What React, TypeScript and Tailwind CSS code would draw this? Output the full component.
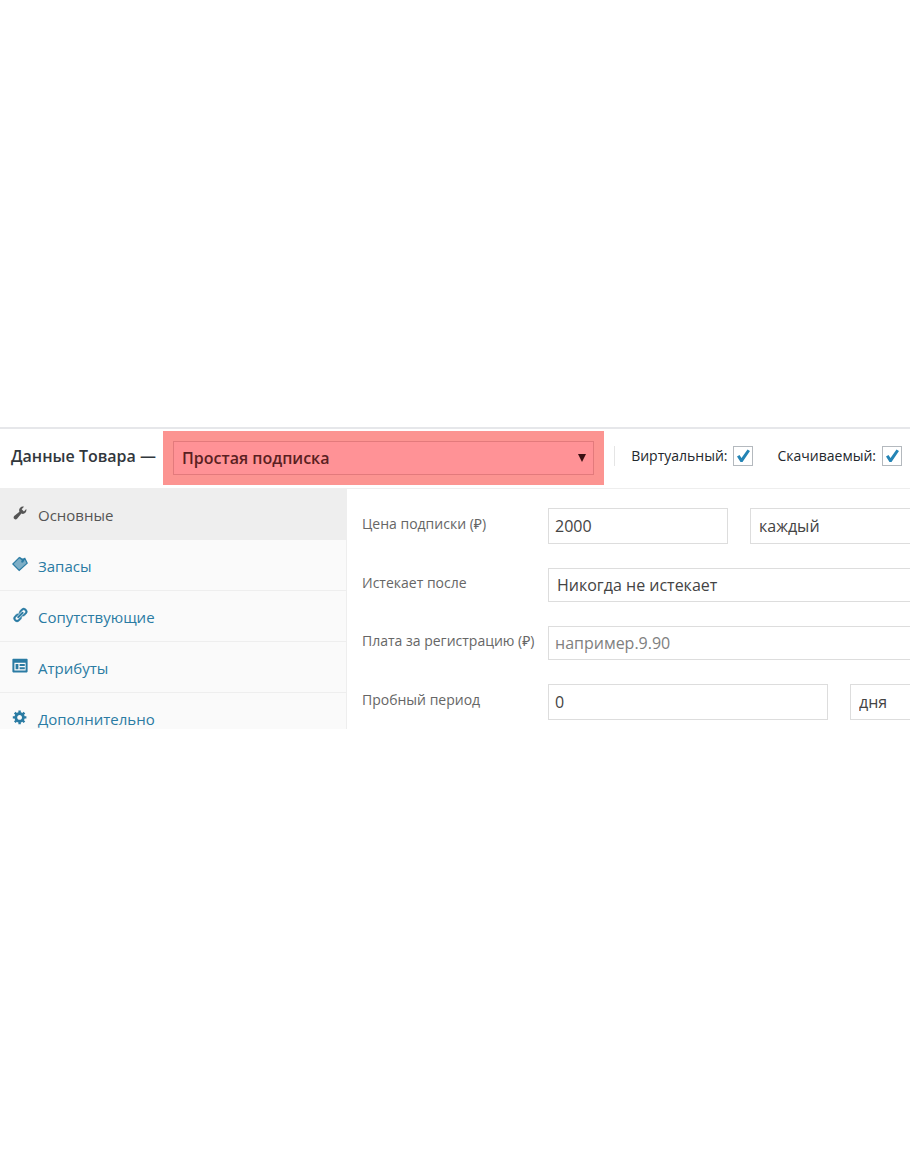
import { ReactNode, useState } from "react";
import { clsx } from "clsx";

type Tab = {
  id: string;
  label: string;
  icon: ReactNode;
};

const tabs: Tab[] = [
  {
    id: "general",
    label: "Основные",
    icon: (
      <path d="M16.68 9.77a4.54 4.54 0 0 1-4.95.99l-5.41 6.52c-.99.99-2.59.99-3.58 0s-.99-2.59 0-3.57l6.52-5.42c-.68-1.65-.35-3.61.99-4.95 1.28-1.28 3.12-1.62 4.72-1.06l-2.89 2.89 2.82 2.82 2.86-2.87c.53 1.58.18 3.39-1.08 4.65z" />
    ),
  },
  {
    id: "inventory",
    label: "Запасы",
    icon: (
      <>
        <path d="M9 2 1 10l8 8 10-9-3-6z" opacity="0.6" />
        <path
          d="M9 2 1 10l8 8 10-9-3-6-3 2zM10 2l3 3M13 5l-1 3M16 3l-3 5"
          fill="none"
          stroke="currentColor"
          strokeWidth="1.5"
        />
      </>
    ),
  },
  {
    id: "linked",
    label: "Сопутствующие",
    icon: (
      <path
        d="M17.74 2.76a4.321 4.321 0 0 1 0 6.1l-1.53 1.52c-1.12 1.12-2.7 1.47-4.14 1.09l2.62-2.61.76-.77.76-.76c.84-.84.84-2.2 0-3.04a2.13 2.13 0 0 0-3.04 0l-.77.76-3.38 3.38c-.37-1.44-.02-3.02 1.1-4.14l1.52-1.53a4.321 4.321 0 0 1 6.1 0zM8.59 13.43l5.34-5.34c.42-.42.42-1.1 0-1.52-.44-.43-1.13-.39-1.53 0l-5.33 5.34c-.42.42-.42 1.1 0 1.52.44.43 1.13.39 1.52 0zm-.76 2.29l4.14-4.15c.38 1.44.03 3.02-1.09 4.14l-1.52 1.53a4.321 4.321 0 0 1-6.1 0 4.321 4.321 0 0 1 0-6.1l1.53-1.52c1.12-1.12 2.7-1.47 4.14-1.1l-4.14 4.15c-.85.84-.85 2.2 0 3.05.84.84 2.2.84 3.04 0z"
        stroke="currentColor"
        strokeWidth="0.5"
      />
    ),
  },
  {
    id: "attributes",
    label: "Атрибуты",
    icon: (
      <path
        fillRule="evenodd"
        d="M18.500 1h-17a1 1 0 0 0-1 1v15a1 1 0 0 0 1 1h17a1 1 0 0 0 1-1V2a1 1 0 0 0-1-1zM3 6h14v9.500H3zM4.500 7.500V14H8V7.500zM9.500 7.500V10H16V7.500zM9.500 11.500V14H16v-2.500z"
      />
    ),
  },
  {
    id: "advanced",
    label: "Дополнительно",
    icon: (
      <path d="M18 12h-2.180c-.170.700-.440 1.350-.810 1.930l1.540 1.540-2.100 2.100-1.540-1.540c-.580.360-1.230.630-1.910.790V19H8v-2.180c-.680-.160-1.330-.430-1.910-.790l-1.540 1.540-2.120-2.120 1.540-1.540c-.360-.580-.630-1.230-.790-1.910H1V9.030h2.170c.160-.700.440-1.350.800-1.940L2.430 5.550l2.100-2.100 1.540 1.540c.580-.370 1.240-.640 1.930-.810V2h3v2.180c.680.160 1.330.430 1.910.790l1.540-1.540 2.120 2.120-1.540 1.540c.360.590.640 1.240.800 1.940H18V12zm-8.500 1.500c1.660 0 3-1.340 3-3s-1.340-3-3-3-3 1.340-3 3 1.340 3 3 3z" />
    ),
  },
];

const fieldClass = "min-w-0 rounded-none border border-[#dddddd] bg-white text-base text-[#444444] outline-none";

function CheckField({ id, label }: { id: string; label: string }) {
  const [checked, setChecked] = useState(true);

  return (
    <div className="flex items-center gap-1.5">
      <label htmlFor={id} className="text-sm font-medium whitespace-nowrap text-[#23282d]">
        {label}
      </label>
      <span className="relative block size-5">
        <input
          id={id}
          type="checkbox"
          checked={checked}
          onChange={(e) => setChecked(e.target.checked)}
          className="block size-5 appearance-none border border-[#b4b9be] bg-white"
        />
        {checked && (
          <svg
            viewBox="0 0 20 20"
            className="pointer-events-none absolute inset-0 size-5 fill-[#2484b5]"
          >
            <path d="M14.500 3.500 17 5 9.500 16H7.500L4 10.500l2.500-1.500 2 3z" />
          </svg>
        )}
      </span>
    </div>
  );
}

function FieldRow({ id, label, children }: { id: string; label: string; children: ReactNode }) {
  return (
    <div className="flex items-center">
      <label htmlFor={id} className="w-[186px] shrink-0 pb-1 text-sm whitespace-nowrap text-[#666666]">
        {label}
      </label>
      {children}
    </div>
  );
}

export default function App() {
  const [active, setActive] = useState("general");

  return (
    <div className="min-h-screen bg-white pt-[427px] font-['Open_Sans','Noto_Sans',sans-serif]">
      <section className="border-t-2 border-[#e6e7ea] bg-white">
        <header className="flex items-start border-b border-[#eeeeee] pt-0.5 pr-2 pb-[3px] pl-[11px]">
          <label
            htmlFor="product-type"
            className="pt-[13px] text-base leading-6 font-semibold whitespace-nowrap text-[#32373c]"
          >
            Данные Товара —
          </label>
          <div className="relative ml-[7px] min-w-0 flex-1 bg-[#fc9491] p-2.5">
            <select
              id="product-type"
              className="block h-[34px] w-full appearance-none border border-[#e37a7c] bg-[#ff9296] px-2 text-base font-semibold text-[#5a1f22] outline-none"
            >
              <option>Простая подписка</option>
            </select>
            <svg
              viewBox="0 0 8 8"
              className="pointer-events-none absolute top-[23px] right-[18px] size-2 fill-[#3a0f12]"
            >
              <path d="M0 0h8L4 8z" />
            </svg>
          </div>
          <div className="mt-[15px] ml-2.5 flex items-center gap-6 border-l border-[#e5e5e5] pl-4">
            <CheckField id="virtual" label="Виртуальный:" />
            <CheckField id="downloadable" label="Скачиваемый:" />
          </div>
        </header>

        <div className="flex">
          <nav className="w-[347px] shrink-0 border-r border-[#eeeeee] bg-[#fafafa]">
            <ul>
              {tabs.map((tab) => (
                <li key={tab.id} className="group">
                  <a
                    href={`#${tab.id}`}
                    onClick={() => setActive(tab.id)}
                    className={clsx(
                      "flex items-start gap-2.5 border-b border-[#eeeeee] pt-4 pb-3.5 pl-3 text-[15px] leading-5 group-last:border-b-0 group-last:pb-0",
                      active === tab.id ? "bg-[#eeeeee] text-[#555555]" : "text-[#2a7ba3]"
                    )}
                  >
                    <svg viewBox="0 0 20 20" className="size-4 shrink-0 fill-current">
                      {tab.icon}
                    </svg>
                    {tab.label}
                  </a>
                </li>
              ))}
            </ul>
          </nav>

          <form className="flex min-w-0 flex-1 flex-col gap-6 pt-[19px] pl-[15px]">
            <FieldRow id="price" label="Цена подписки (₽)">
              <input
                id="price"
                type="text"
                defaultValue="2000"
                className={clsx(fieldClass, "h-9 w-[180px] px-1.5")}
              />
              <select
                aria-label="Интервал оплаты"
                className={clsx(fieldClass, "ml-[22px] h-9 flex-1 appearance-none border-r-0 px-2")}
              >
                <option>каждый</option>
              </select>
            </FieldRow>
            <FieldRow id="expires" label="Истекает после">
              <select
                id="expires"
                className={clsx(fieldClass, "h-[34px] flex-1 appearance-none border-r-0 px-2")}
              >
                <option>Никогда не истекает</option>
              </select>
            </FieldRow>
            <FieldRow id="signup-fee" label="Плата за регистрацию (₽)">
              <input
                id="signup-fee"
                type="text"
                placeholder="например.9.90"
                className={clsx(fieldClass, "h-[34px] flex-1 border-r-0 px-1.5 placeholder:text-[#808080]")}
              />
            </FieldRow>
            <FieldRow id="trial" label="Пробный период">
              <input
                id="trial"
                type="text"
                defaultValue="0"
                className={clsx(fieldClass, "h-9 w-[280px] px-1.5")}
              />
              <select
                aria-label="Единица пробного периода"
                className={clsx(fieldClass, "ml-[22px] h-9 flex-1 appearance-none border-r-0 px-2")}
              >
                <option>дня</option>
              </select>
            </FieldRow>
          </form>
        </div>
      </section>
    </div>
  );
}
